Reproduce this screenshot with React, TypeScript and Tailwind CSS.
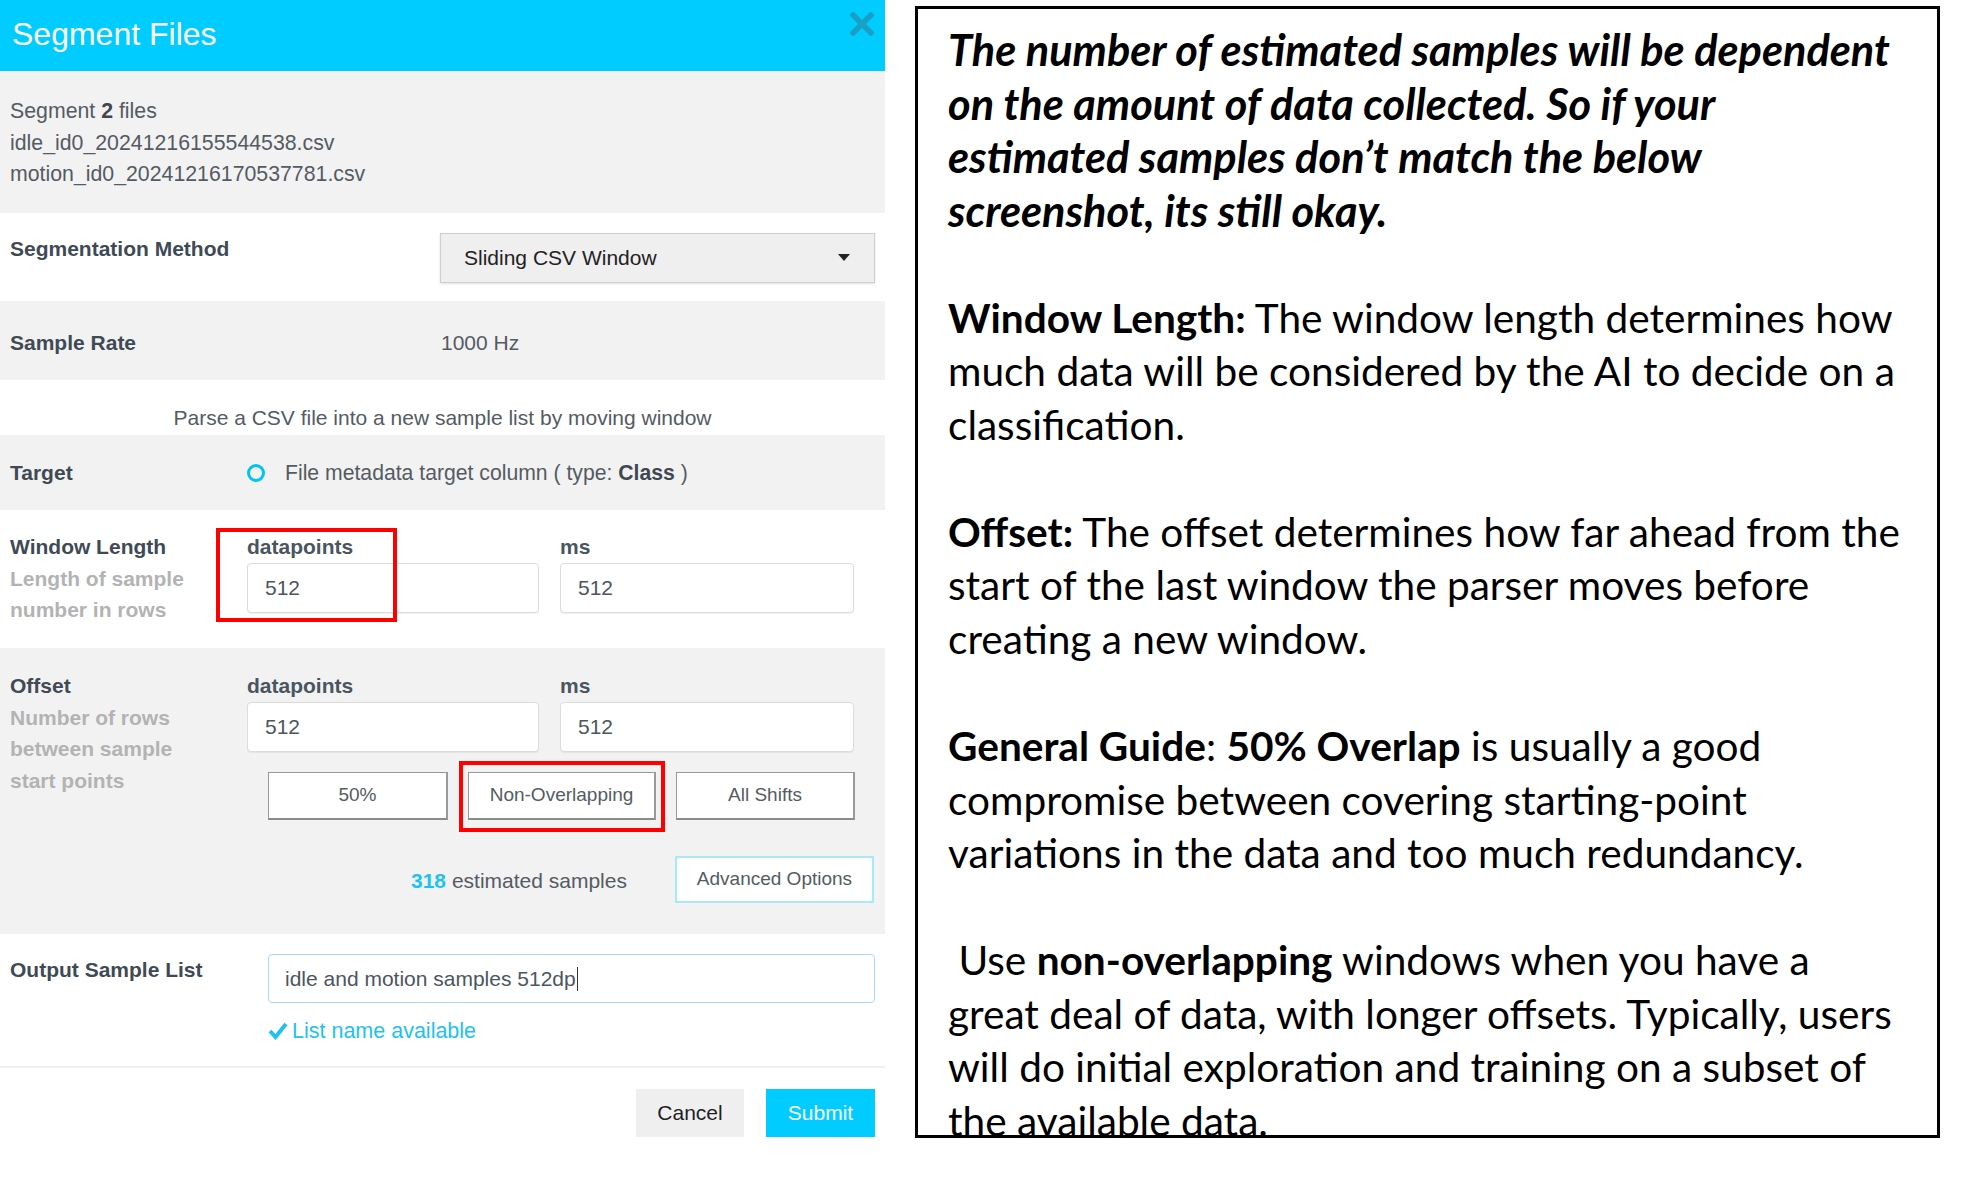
import React from 'react';

const sans = { fontFamily: '"Liberation Sans", Arial, sans-serif' };

function TextInput({ value, width }: { value: string; width: string }) {
  return (
    <div
      className={`${width} h-[50px] bg-white border border-[#dcdcdc] rounded-[4px] shadow-[0_1px_1px_rgba(0,0,0,0.06)] flex items-center pl-[17px] text-[21px] text-[#4d5560]`}
    >
      {value}
    </div>
  );
}

function ShiftButton({ label, width }: { label: string; width: string }) {
  return (
    <div
      className={`${width} h-[48px] bg-white border border-[#9a9a9a] border-b-2 border-r-2 border-b-[#8a8a8a] flex items-center justify-center text-[19px] text-[#555b62]`}
    >
      {label}
    </div>
  );
}

function SegmentPanel() {
  return (
    <div className="w-[885px] flex flex-col text-[#555b62]" style={sans}>
      {/* header */}
      <div className="h-[71px] bg-[#00ccff] flex items-start justify-between pl-[12px] pr-[10px]">
        <div className="text-white text-[32px] leading-[68px]">Segment Files</div>
        <svg width="26" height="26" viewBox="0 0 26 26" className="mt-[11px]">
          <path d="M4 4 L22 22 M22 4 L4 22" stroke="#1a9fc4" strokeWidth="5.5" strokeLinecap="round" />
        </svg>
      </div>

      {/* file list */}
      <div className="h-[142px] bg-[#f2f2f2] pt-[25px] px-[10px] text-[21.3px] leading-[31.5px]">
        <div>
          Segment <span className="font-bold text-[#3f4750]">2</span> files
        </div>
        <div>idle_id0_20241216155544538.csv</div>
        <div>motion_id0_20241216170537781.csv</div>
      </div>

      {/* segmentation method */}
      <div className="h-[88px] bg-white flex pl-[10px] pr-[10px]">
        <div className="w-[430px] pt-[20px] text-[21px] leading-[31.5px] font-bold text-[#3f4a55]">
          Segmentation Method
        </div>
        <div className="mt-[20px] w-[435px] h-[50px] bg-[#efefef] border border-[#cfcfcf] shadow-[0_1px_2px_rgba(0,0,0,0.12)] flex items-center justify-between pl-[23px] pr-[24px] text-[21px] text-[#222]">
          <span>Sliding CSV Window</span>
          <svg width="12" height="8" viewBox="0 0 12 8">
            <path d="M0 0 L12 0 L6 7 Z" fill="#222" />
          </svg>
        </div>
      </div>

      {/* sample rate */}
      <div className="h-[79px] bg-[#f2f2f2] flex items-center pl-[10px] pt-[4px]">
        <div className="w-[431px] text-[21px] font-bold text-[#3f4a55]">Sample Rate</div>
        <div className="text-[21px] text-[#555b62]">1000 Hz</div>
      </div>

      {/* description */}
      <div className="h-[55px] bg-white flex items-start justify-center pt-[27px] text-[21px] leading-[21px]">
        Parse a CSV file into a new sample list by moving window
      </div>

      {/* target */}
      <div className="h-[75px] bg-[#f2f2f2] flex items-center pl-[10px]">
        <div className="w-[237px] text-[21px] font-bold text-[#3f4a55]">Target</div>
        <div className="w-[18px] h-[18px] rounded-full border-[3.5px] border-[#00c3f5]" />
        <div className="ml-[20px] text-[21.2px]">
          File metadata target column ( type: <span className="font-bold text-[#3f4750]">Class</span> )
        </div>
      </div>

      {/* window length */}
      <div className="relative h-[138px] bg-white flex pl-[10px]">
        <div className="w-[237px] pt-[21px] text-[21px] leading-[31.5px] font-bold">
          <div className="text-[#3f4a55]">Window Length</div>
          <div className="text-[#b3b3b3]">Length of sample</div>
          <div className="text-[#b3b3b3]">number in rows</div>
        </div>
        <div className="flex gap-[21px] pt-[21px]">
          <div className="flex flex-col">
            <div className="h-[31.5px] leading-[31.5px] text-[21px] font-bold text-[#4a5560]">datapoints</div>
            <TextInput value="512" width="w-[292px]" />
          </div>
          <div className="flex flex-col">
            <div className="h-[31.5px] leading-[31.5px] text-[21px] font-bold text-[#4a5560]">ms</div>
            <TextInput value="512" width="w-[294px]" />
          </div>
        </div>
        <div className="absolute left-[216px] top-[18px] w-[181px] h-[94px] border-[4px] border-[#ff0000]" />
      </div>

      {/* offset */}
      <div className="relative h-[286px] bg-[#f2f2f2] flex pl-[10px]">
        <div className="w-[237px] pt-[22px] text-[21px] leading-[31.5px] font-bold">
          <div className="text-[#3f4a55]">Offset</div>
          <div className="text-[#b3b3b3]">Number of rows</div>
          <div className="text-[#b3b3b3]">between sample</div>
          <div className="text-[#b3b3b3]">start points</div>
        </div>
        <div className="flex flex-col pt-[22px]">
          <div className="flex gap-[21px]">
            <div className="flex flex-col">
              <div className="h-[31.5px] leading-[31.5px] text-[21px] font-bold text-[#4a5560]">datapoints</div>
              <TextInput value="512" width="w-[292px]" />
            </div>
            <div className="flex flex-col">
              <div className="h-[31.5px] leading-[31.5px] text-[21px] font-bold text-[#4a5560]">ms</div>
              <TextInput value="512" width="w-[294px]" />
            </div>
          </div>
          <div className="flex gap-[20px] mt-[20px] ml-[21px]">
            <ShiftButton label="50%" width="w-[180px]" />
            <ShiftButton label="Non-Overlapping" width="w-[188px]" />
            <ShiftButton label="All Shifts" width="w-[179px]" />
          </div>
          <div className="flex items-center mt-[36px] ml-[164px]">
            <div className="text-[21px] mt-[4px]">
              <span className="text-[#1ec2f0] font-bold">318</span> estimated samples
            </div>
            <div className="ml-[48px] w-[199px] h-[47px] bg-white border-2 border-[#a8e8fb] flex items-center justify-center text-[19px]">
              Advanced Options
            </div>
          </div>
        </div>
        <div className="absolute left-[459px] top-[113px] w-[206px] h-[71px] border-[4px] border-[#ff0000]" />
      </div>

      {/* output sample list */}
      <div className="h-[134px] bg-white flex pl-[10px] border-b-2 border-[#efefef]">
        <div className="w-[258px] pt-[20px] text-[21px] leading-[31.5px] font-bold text-[#3f4a55]">
          Output Sample List
        </div>
        <div className="flex flex-col pt-[20px]">
          <div className="w-[607px] h-[49px] bg-white border-[1.5px] border-[#a9dcef] rounded-[4px] flex items-center pl-[16px] text-[21px] text-[#4d5560]">
            idle and motion samples 512dp<span className="inline-block w-[1px] h-[24px] bg-[#333] ml-[1px]" />
          </div>
          <div className="flex items-center mt-[12px] text-[21.5px] text-[#1ec2f0]">
            <svg width="20" height="18" viewBox="0 0 20 18" className="mr-[4px]">
              <path d="M2 9 L7.5 15 L18 2" stroke="#1ec2f0" strokeWidth="4" fill="none" />
            </svg>
            List name available
          </div>
        </div>
      </div>

      {/* footer */}
      <div className="flex justify-end gap-[22px] pt-[21px] pr-[10px]">
        <div className="w-[108px] h-[48px] bg-[#efefef] flex items-center justify-center text-[21px] text-[#1f1f1f]">
          Cancel
        </div>
        <div className="w-[109px] h-[48px] bg-[#00ccff] flex items-center justify-center text-[21px] text-white">
          Submit
        </div>
      </div>
    </div>
  );
}

function NotesPanel() {
  return (
    <div
      className="mt-[6px] ml-[30px] w-[1025px] h-[1132px] border-[3px] border-black overflow-hidden pl-[30px] pt-[14px] text-black text-[40.6px] leading-[53.55px] whitespace-pre"
      style={{ fontFamily: 'Lato, "Open Sans", sans-serif' }}
    >
      <div className="font-bold italic text-[43.3px]">
        <div>The number of estimated samples will be dependent</div>
        <div>on the amount of data collected. So if your</div>
        <div>estimated samples don’t match the below</div>
        <div>screenshot, its still okay.</div>
      </div>
      <div className="h-[53.55px]" />
      <div>
        <b>Window Length:</b> The window length determines how
      </div>
      <div>much data will be considered by the AI to decide on a</div>
      <div>classification.</div>
      <div className="h-[53.55px]" />
      <div>
        <b>Offset:</b> The offset determines how far ahead from the
      </div>
      <div>start of the last window the parser moves before</div>
      <div>creating a new window.</div>
      <div className="h-[53.55px]" />
      <div>
        <b>General Guide</b>: <b>50% Overlap</b> is usually a good
      </div>
      <div>compromise between covering starting-point</div>
      <div>variations in the data and too much redundancy.</div>
      <div className="h-[53.55px]" />
      <div>
        {' '}Use <b>non-overlapping</b> windows when you have a
      </div>
      <div>great deal of data, with longer offsets. Typically, users</div>
      <div>will do initial exploration and training on a subset of</div>
      <div>the available data.</div>
    </div>
  );
}

export default function App() {
  return (
    <div className="w-[1966px] h-[1182px] bg-white flex items-start overflow-hidden">
      <SegmentPanel />
      <NotesPanel />
    </div>
  );
}
